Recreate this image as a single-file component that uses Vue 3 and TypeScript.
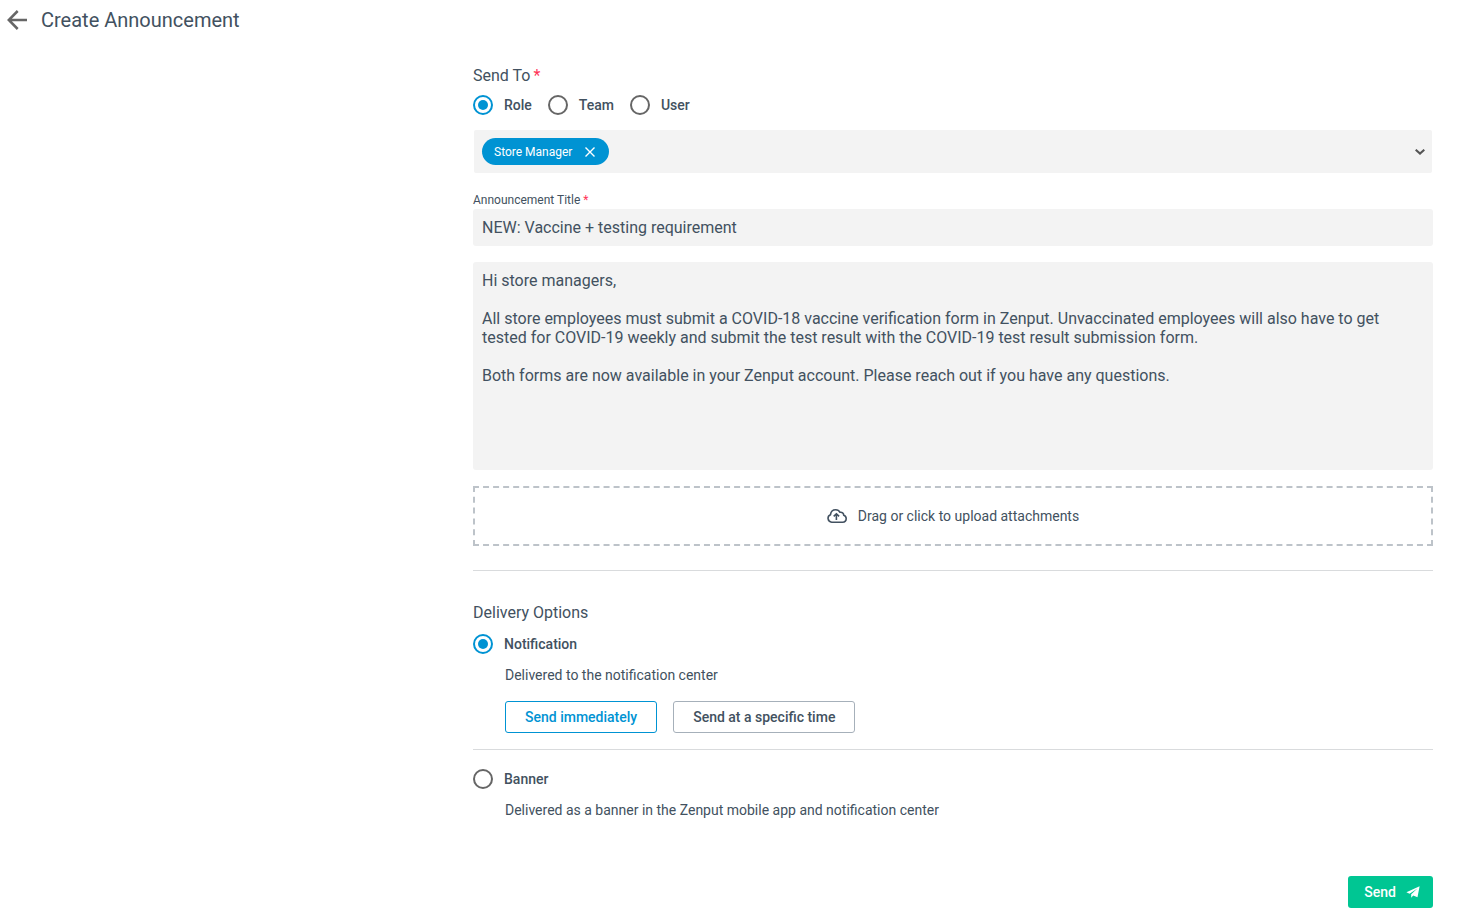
<script setup lang="ts">
import { ref } from 'vue'

type Audience = 'Role' | 'Team' | 'User'
type Delivery = 'notification' | 'banner'
type Timing = 'now' | 'scheduled'

const audiences: Audience[] = ['Role', 'Team', 'User']
const roles: string[] = ['Store Manager']

const audience = ref<Audience>('Role')
const selected = ref<string[]>(['Store Manager'])
const pending = ref('')
const title = ref('NEW: Vaccine + testing requirement')
const message = ref(
  'Hi store managers,\n\n' +
    'All store employees must submit a COVID-18 vaccine verification form in Zenput. ' +
    'Unvaccinated employees will also have to get tested for COVID-19 weekly and submit ' +
    'the test result with the COVID-19 test result submission form.\n\n' +
    'Both forms are now available in your Zenput account. Please reach out if you have any questions.'
)
const delivery = ref<Delivery>('notification')
const timing = ref<Timing>('now')

function addRole(): void {
  if (pending.value && !selected.value.includes(pending.value)) {
    selected.value.push(pending.value)
  }
  pending.value = ''
}

function removeRole(role: string): void {
  selected.value = selected.value.filter((r) => r !== role)
}
</script>

<template>
  <div class="page">
    <header class="header">
      <button class="back" type="button" aria-label="Back">
        <svg width="20" height="20" viewBox="0 0 20 20" fill="none" stroke="currentColor" stroke-width="2.5">
          <path d="M20 10H2M10.7 1 1.8 10l8.9 9" />
        </svg>
      </button>
      <h1>Create Announcement</h1>
    </header>

    <form class="form" @submit.prevent>
      <fieldset class="group">
        <legend class="heading">Send To<span class="required">*</span></legend>
        <div class="audiences">
          <label v-for="a in audiences" :key="a" class="radio">
            <input v-model="audience" type="radio" name="audience" :value="a" />
            <span>{{ a }}</span>
          </label>
        </div>
      </fieldset>

      <div class="picker">
        <span v-for="role in selected" :key="role" class="chip">
          {{ role }}
          <button type="button" :aria-label="'Remove ' + role" @click="removeRole(role)">
            <svg width="10" height="10" viewBox="0 0 10 10" fill="none" stroke="currentColor" stroke-width="1.4">
              <path d="M.5.5l9 9M9.5.5l-9 9" />
            </svg>
          </button>
        </span>
        <select v-model="pending" aria-label="Roles" @change="addRole">
          <option value=""></option>
          <option v-for="role in roles" :key="role" :value="role">{{ role }}</option>
        </select>
        <svg class="chevron" width="10" height="6" viewBox="0 0 10 6" fill="none" stroke="currentColor" stroke-width="2">
          <path d="M.7.7 5 4.6 9.3.7" />
        </svg>
      </div>

      <label class="caption" for="title">Announcement Title<span class="required">*</span></label>
      <input id="title" v-model="title" class="field" type="text" />
      <textarea v-model="message" class="field message" aria-label="Message"></textarea>

      <label class="dropzone">
        <input class="file" type="file" multiple />
        <svg width="20" height="14" viewBox="0 0 20 14" fill="none" stroke="currentColor" stroke-width="1.6" stroke-linejoin="round">
          <path d="M4.7 13.2A3.9 3.9 0 0 1 3.5 5.7C3.8 2.8 6 .8 8.7.8c2 0 3.5.9 4.3 2.5 2.1-.4 3.7.9 3.7 2.9 1.5.4 2.5 1.7 2.5 3.4 0 2.1-1.5 3.6-3.6 3.6z" />
          <path d="M9.4 11V5M6.7 7.4l2.7-2.7 2.7 2.7" />
        </svg>
        <span>Drag or click to upload attachments</span>
      </label>

      <hr />

      <fieldset class="group delivery">
        <legend class="heading">Delivery Options</legend>
        <label class="radio">
          <input v-model="delivery" type="radio" name="delivery" value="notification" />
          <span>Notification</span>
        </label>
        <div class="details">
          <p>Delivered to the notification center</p>
          <div class="timings">
            <button type="button" class="option" :class="{ active: timing === 'now' }" @click="timing = 'now'">
              Send immediately
            </button>
            <button type="button" class="option" :class="{ active: timing === 'scheduled' }" @click="timing = 'scheduled'">
              Send at a specific time
            </button>
          </div>
        </div>
        <hr class="divider" />
        <label class="radio">
          <input v-model="delivery" type="radio" name="delivery" value="banner" />
          <span>Banner</span>
        </label>
        <div class="details">
          <p>Delivered as a banner in the Zenput mobile app and notification center</p>
        </div>
      </fieldset>

      <button class="send" type="submit">
        Send
        <svg width="14" height="12" viewBox="0 0 14 12" fill="currentColor">
          <path d="M13.6.2.4 6.3l3.2 1.5L11.4 2.4 5.2 8.3v3.5l2-2.4 4.3 1.8z" />
        </svg>
      </button>
    </form>
  </div>
</template>

<style>
body {
  margin: 0;
  background: #fff;
}
</style>

<style scoped>
.page {
  color: #425160;
  font-family: Roboto, sans-serif;
  font-size: 14px;
  line-height: 20px;
}

.page *,
.page *::before {
  box-sizing: border-box;
}

button,
input,
select,
textarea {
  margin: 0;
  color: inherit;
  font: inherit;
}

button {
  padding: 0;
  border: 0;
  background: none;
  cursor: pointer;
}

svg {
  display: block;
  flex: none;
}

.header {
  display: flex;
  align-items: center;
  gap: 14px;
  height: 40px;
  padding-left: 7px;
}

.back {
  color: #666;
}

h1 {
  margin: 0;
  font-size: 20px;
  font-weight: 400;
  line-height: 24px;
}

.form {
  display: flex;
  flex-direction: column;
  max-width: 960px;
  margin: 0 35px 0 auto;
  padding: 24px 0 8px;
}

.group {
  min-width: 0;
  margin: 0;
  padding: 0;
  border: 0;
}

.heading {
  padding: 0;
  font-size: 16px;
  line-height: 24px;
}

.required {
  margin-left: 3px;
  color: #ff3358;
}

.audiences {
  display: flex;
  gap: 16px;
  padding: 7px 0 15px;
}

.radio {
  display: flex;
  align-items: center;
  gap: 11px;
  font-weight: 500;
}

.radio input {
  display: grid;
  place-items: center;
  width: 20px;
  height: 20px;
  border: 2px solid #666;
  border-radius: 50%;
  appearance: none;
}

.radio input:checked {
  border-color: #0093d3;
}

.radio input:checked::before {
  width: 10px;
  height: 10px;
  border-radius: 50%;
  background: #0093d3;
  content: '';
}

.picker {
  display: flex;
  align-items: center;
  min-height: 43px;
  margin: 0 1px;
  padding: 0 7px 0 8px;
  border-radius: 2px;
  background: #f3f3f3;
}

.chip {
  display: flex;
  align-items: center;
  gap: 13px;
  height: 27px;
  padding: 0 14px 0 12px;
  border-radius: 14px;
  background: #0093d3;
  color: #fff;
  font-size: 12px;
}

.picker select {
  flex: 1;
  align-self: stretch;
  min-width: 0;
  border: 0;
  background: none;
  appearance: none;
}

.chevron {
  color: #555;
}

.caption {
  margin-top: 19px;
  padding-bottom: 1px;
  font-size: 12px;
  line-height: 16px;
}

.field {
  width: 100%;
  padding: 9px;
  border: 0;
  border-radius: 3px;
  background: #f3f3f3;
  font-size: 16px;
  line-height: 19px;
}

.message {
  height: 208px;
  margin-top: 16px;
  padding: 9px 24px 9px 9px;
  resize: none;
}

.dropzone {
  display: flex;
  align-items: center;
  justify-content: center;
  gap: 11px;
  height: 60px;
  margin-top: 16px;
  border: 2px dashed #bdc3c9;
  cursor: pointer;
}

.file {
  position: absolute;
  width: 1px;
  height: 1px;
  opacity: 0;
}

hr {
  width: 100%;
  height: 1px;
  margin: 24px 0 0;
  border: 0;
  background: #d9dbdd;
}

.delivery {
  margin-top: 30px;
}

.delivery .heading {
  margin-bottom: 9px;
}

.details {
  padding: 11px 0 0 32px;
}

p {
  margin: 0;
}

.timings {
  display: flex;
  flex-wrap: wrap;
  gap: 16px;
  margin-top: 16px;
}

.option {
  height: 32px;
  padding: 0 19px;
  border: 1px solid #a6b0ba;
  border-radius: 3px;
  font-weight: 500;
}

.option.active {
  border-color: #0093d3;
  color: #0093d3;
}

.divider {
  margin: 16px 0 19px;
}

.send {
  display: flex;
  align-items: center;
  align-self: flex-end;
  gap: 10px;
  height: 32px;
  margin-top: 56px;
  padding: 0 13px 0 16px;
  border-radius: 3px;
  background: #00c693;
  color: #fff;
  font-weight: 500;
}
</style>
